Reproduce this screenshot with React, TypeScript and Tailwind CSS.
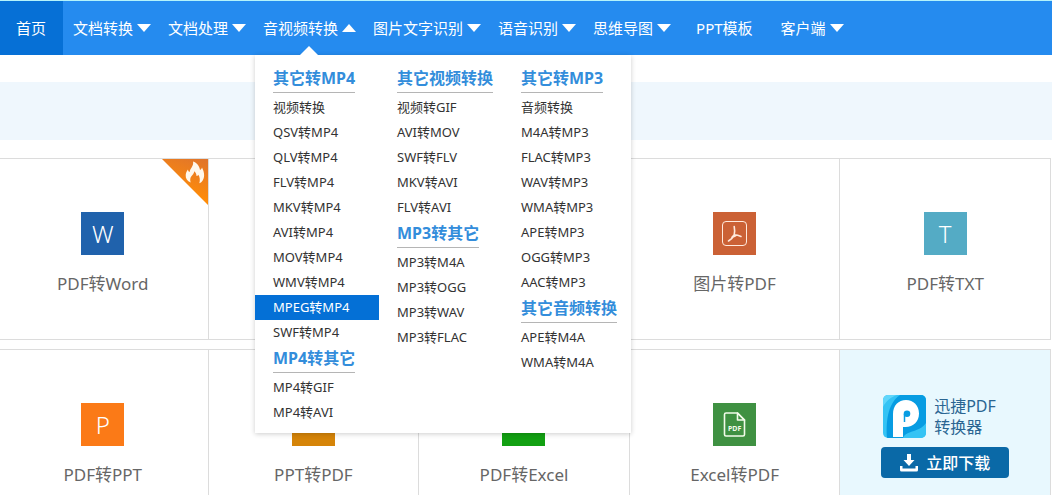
import React from "react";

type NavItem = { label: string; arrow?: "up" | "down" };
type MenuGroup = { title: string; items: string[] };
type Tool = { label: string; color: string; icon: React.ReactNode; hot?: boolean };

const navItems: NavItem[] = [
  { label: "文档转换", arrow: "down" },
  { label: "文档处理", arrow: "down" },
  { label: "音视频转换", arrow: "up" },
  { label: "图片文字识别", arrow: "down" },
  { label: "语音识别", arrow: "down" },
  { label: "思维导图", arrow: "down" },
  { label: "PPT模板" },
  { label: "客户端", arrow: "down" },
];

const menuColumns: MenuGroup[][] = [
  [
    {
      title: "其它转MP4",
      items: [
        "视频转换",
        "QSV转MP4",
        "QLV转MP4",
        "FLV转MP4",
        "MKV转MP4",
        "AVI转MP4",
        "MOV转MP4",
        "WMV转MP4",
        "MPEG转MP4",
        "SWF转MP4",
      ],
    },
    { title: "MP4转其它", items: ["MP4转GIF", "MP4转AVI"] },
  ],
  [
    { title: "其它视频转换", items: ["视频转GIF", "AVI转MOV", "SWF转FLV", "MKV转AVI", "FLV转AVI"] },
    { title: "MP3转其它", items: ["MP3转M4A", "MP3转OGG", "MP3转WAV", "MP3转FLAC"] },
  ],
  [
    {
      title: "其它转MP3",
      items: [
        "音频转换",
        "M4A转MP3",
        "FLAC转MP3",
        "WAV转MP3",
        "WMA转MP3",
        "APE转MP3",
        "OGG转MP3",
        "AAC转MP3",
      ],
    },
    { title: "其它音频转换", items: ["APE转M4A", "WMA转M4A"] },
  ],
];

const activeItem = "MPEG转MP4";

const PdfIcon = () => (
  <svg viewBox="0 0 43 43" className="size-full" fill="none" stroke="#ffe9dc">
    <rect x="9.5" y="9.5" width="24" height="24" rx="3.5" />
    <path
      d="M21.200 14.500c.6 3 .6 5.500 0 8.300-1.200 2.600-3 4.600-5.700 6.200M21.200 22.800c2.300.2 4.500.7 6.800 1.700M21 23l-2.500 2.800 4-2"
      strokeWidth="1.600"
      strokeLinecap="round"
    />
  </svg>
);

const PdfFileIcon = () => (
  <svg viewBox="0 0 43 43" className="size-full" fill="none" stroke="#f2fbea" strokeWidth="1.600">
    <path
      d="M24.500 10H13a1.500 1.500 0 0 0-1.500 1.500v20A1.500 1.500 0 0 0 13 33h17a1.500 1.500 0 0 0 1.500-1.500V17z"
      strokeLinejoin="round"
    />
    <path d="M24.500 10v7h7z" strokeLinejoin="round" />
    <text x="15" y="28" fontSize="7" fontWeight="700" fill="#f2fbea" stroke="none" fontFamily="Noto Sans, sans-serif">
      PDF
    </text>
  </svg>
);

const FlameBadge = () => (
  <svg viewBox="0 0 46 46" className="absolute right-0 top-0 size-[46px]">
    <defs>
      <linearGradient id="hot" x1="0.9" y1="0" x2="0.6" y2="0.8">
        <stop offset="0" stopColor="#e0752c" />
        <stop offset="1" stopColor="#ff8c08" />
      </linearGradient>
    </defs>
    <path d="M0 0h46v46z" fill="url(#hot)" />
    <path
      d="M31 2.500c4 1.300 6.500 4.500 7 8.500 1-.5 1.700-1.300 2-2.500 2.600 5 3.300 10.500-.5 14.500-.6.600-1.300.9-2.200 1.200 1-3.200.6-6.200-1-8.500-.5.800-1 1.200-1.800 1.300-.1-2-.8-3.500-2.200-4.700-.5 2.500-1.800 3.500-2.900 5-1.300 1.800-1.500 3.600-.7 6.200-3.500-1.200-5.300-4-5-7.500.2-2.200 1-4 2.300-5.500.1 1.300.6 2.100 1.600 2.600C28.200 9 32 7 31 2.500z"
      fill="#fff8ec"
    />
  </svg>
);

const AppLogo = () => (
  <svg viewBox="0 0 43 43" className="size-[43px]">
    <defs>
      <clipPath id="logo">
        <rect width="43" height="43" rx="5" />
      </clipPath>
    </defs>
    <g clipPath="url(#logo)">
      <rect width="43" height="43" fill="#35c3f4" />
      <path d="M17 0h26v34c-6 4-13 5-19 9H4C3 28 4 9 17 0z" fill="#079ce2" />
      <path d="M0 12C3 6 8 2 14 0H0z" fill="#60d6fb" />
      <path d="M20 43c3-8 16-5 23-15v15z" fill="#35c3f4" />
    </g>
    <path
      fillRule="evenodd"
      d="M10 42V19C10 10.500 15.500 5 23 5s13 5.500 13 13.500c0 8-5.500 13.500-13.500 13.500H20v10zM24 15.500a3.300 3.300 0 1 0 0 6.600 3.300 3.300 0 0 0 0-6.600z"
      fill="#fff"
    />
    <path d="M21.500 19v8" stroke="#079ce2" strokeWidth="1.500" />
  </svg>
);

const DownloadIcon = () => (
  <svg viewBox="0 0 18 18" className="size-[18px]" fill="#fff">
    <path d="M7 0h4v6h3.500L9 12 3.500 6H7z" />
    <path d="M0 12h2.500v2.500h13V12H18v4a1.500 1.500 0 0 1-1.500 1.500h-15A1.500 1.500 0 0 1 0 16z" />
  </svg>
);

const firstRow: (Tool | null)[] = [
  { label: "PDF转Word", color: "bg-[#2062ac]", icon: "W", hot: true },
  null,
  null,
  { label: "图片转PDF", color: "bg-[#cb6135]", icon: <PdfIcon /> },
  { label: "PDF转TXT", color: "bg-[#54abc5]", icon: "T" },
];

const secondRow: Tool[] = [
  { label: "PDF转PPT", color: "bg-[#fb7a17]", icon: "P" },
  { label: "PPT转PDF", color: "bg-[#d58408]", icon: null },
  { label: "PDF转Excel", color: "bg-[#12a012]", icon: null },
  { label: "Excel转PDF", color: "bg-[#3f9142]", icon: <PdfFileIcon /> },
];

function Arrow({ direction }: { direction: "up" | "down" }) {
  return (
    <svg viewBox="0 0 14 8" className="h-2 w-3.5" fill="#fff">
      <path d={direction === "up" ? "M0 8h14L7 0z" : "M0 0h14L7 8z"} />
    </svg>
  );
}

function ToolCard({ tool }: { tool: Tool | null }) {
  return (
    <div className="relative h-[182px] border-y border-r border-[#dcdcdc] bg-white">
      {tool && (
        <a href="#" className="flex flex-col items-center pt-[53px]">
          <span
            className={`flex size-[43px] items-center justify-center text-2xl font-light text-white ${tool.color}`}
          >
            {tool.icon}
          </span>
          <span className="mt-4 text-[17px] leading-[26px] text-[#666]">{tool.label}</span>
        </a>
      )}
      {tool?.hot && <FlameBadge />}
    </div>
  );
}

function MegaMenu() {
  return (
    <div className="absolute left-[255px] top-full z-10 flex w-[376px] bg-white pb-2 pt-2.5 shadow-[0_1px_5px_rgba(0,0,0,0.2)]">
      <svg viewBox="0 0 20 10" className="absolute -top-[9px] left-11 h-2.5 w-5" fill="#fff">
        <path d="M0 10h20L10 0z" />
      </svg>
      {menuColumns.map((groups, i) => (
        <div key={i} className="w-[124px]">
          {groups.map((group) => (
            <div key={group.title}>
              <h3 className="mb-0.5 ml-[18px] inline-block border-b border-[#b5b5b5] align-top text-base font-bold leading-[27px] whitespace-nowrap text-[#338ddb]">
                {group.title}
              </h3>
              <ul>
                {group.items.map((item) => (
                  <li key={item}>
                    <a
                      href="#"
                      className={`block pl-[18px] text-[13px] leading-[25px] ${
                        item === activeItem ? "bg-[#0470d6] text-white" : "text-[#333]"
                      }`}
                    >
                      {item}
                    </a>
                  </li>
                ))}
              </ul>
            </div>
          ))}
        </div>
      ))}
    </div>
  );
}

export default function App() {
  return (
    <div className="h-screen overflow-hidden bg-white font-['Noto_Sans','Noto_Sans_CJK_SC',sans-serif]">
      <header className="relative border-t border-[#b4f3fb] bg-[#258bef]">
        <nav className="flex h-[54px] text-[15px] whitespace-nowrap text-white">
          <a href="#" className="flex items-center bg-[#0670d6] pl-4 pr-[17px]">
            首页
          </a>
          {navItems.map((item) => (
            <a
              key={item.label}
              href="#"
              className={`flex items-center gap-1 ${item.arrow ? "pl-2.5 pr-[7px]" : "px-[18px]"}`}
            >
              {item.label}
              {item.arrow && <Arrow direction={item.arrow} />}
            </a>
          ))}
        </nav>
        <MegaMenu />
      </header>

      <main>
        <div className="mt-[27px] h-[58px] bg-[#eff7fd]" />

        <div className="mt-[18px] mr-px -ml-0.5 grid grid-cols-5 gap-y-[9px]">
          {firstRow.map((tool, i) => (
            <ToolCard key={i} tool={tool} />
          ))}
          {secondRow.map((tool) => (
            <ToolCard key={tool.label} tool={tool} />
          ))}

          <div className="flex h-[182px] flex-col items-center border-y border-r border-[#dcdcdc] bg-[#e8f8fe] pt-[45px]">
            <div className="flex w-32 items-center gap-2 pl-0.5">
              <AppLogo />
              <p className="text-base leading-[21px] text-[#2a6592]">
                迅捷PDF
                <br />
                转换器
              </p>
            </div>
            <button
              type="button"
              className="mt-[9px] flex h-[31px] w-32 items-center justify-center gap-2 rounded-sm bg-[#0a69a7] text-base font-medium text-white"
            >
              <DownloadIcon />
              立即下载
            </button>
          </div>
        </div>
      </main>
    </div>
  );
}
